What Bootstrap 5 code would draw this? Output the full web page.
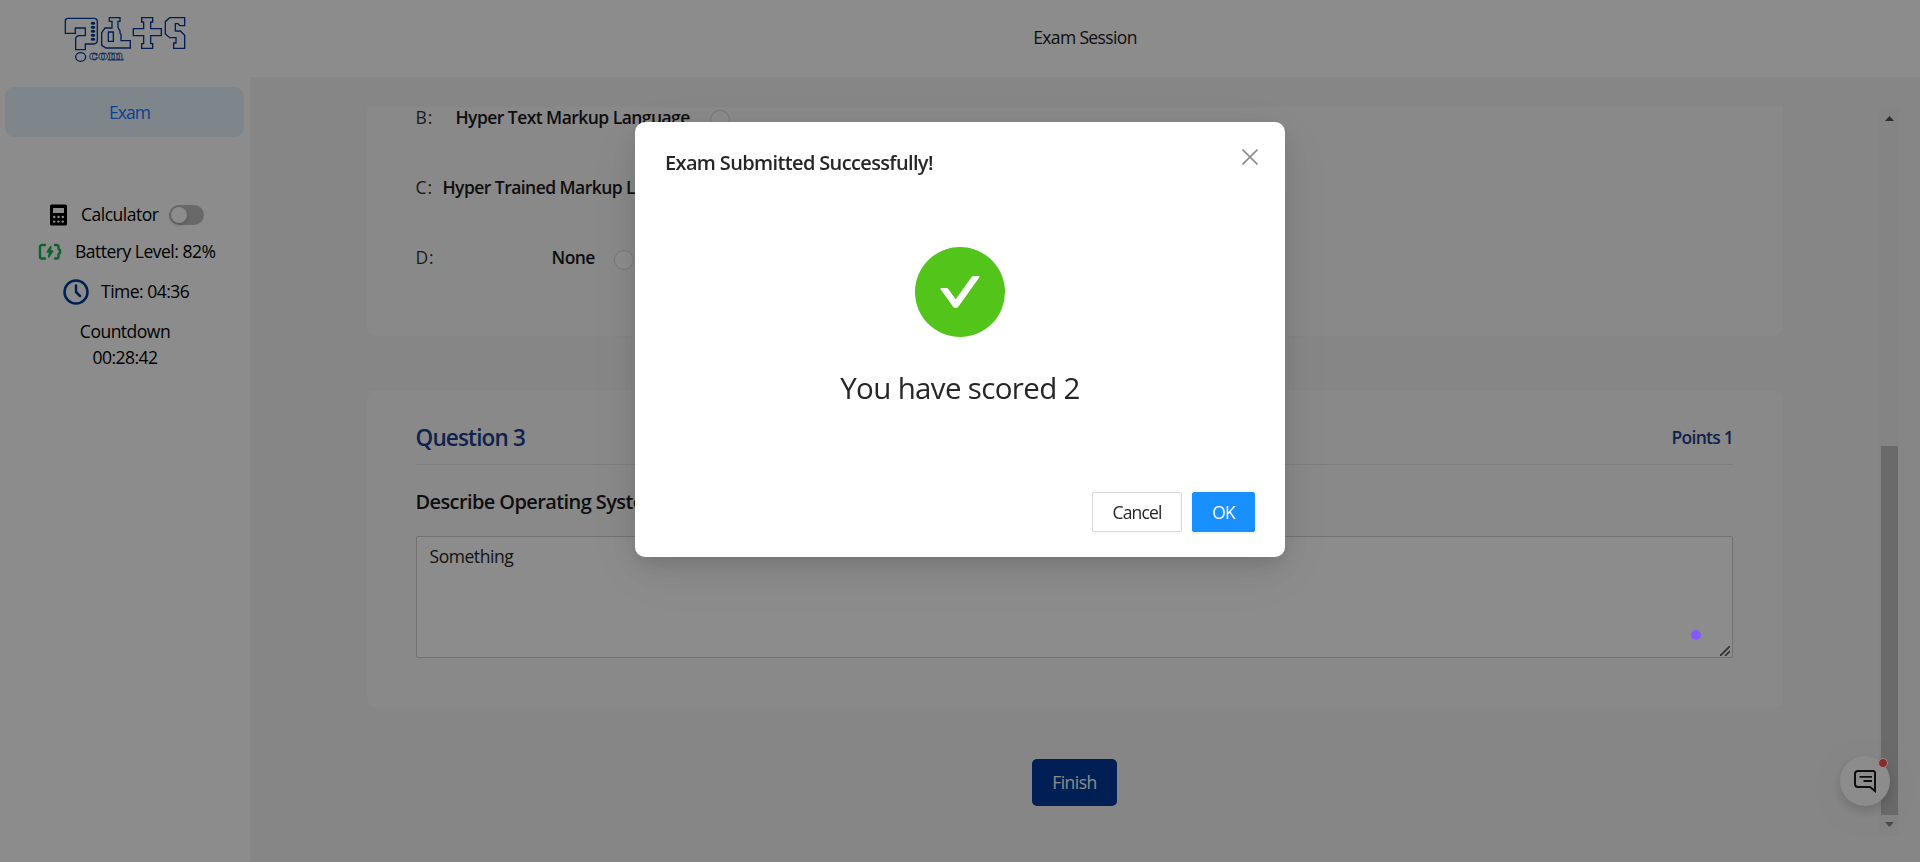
<!DOCTYPE html>
<html lang="en">
<head>
<meta charset="utf-8">
<meta name="viewport" content="width=device-width, initial-scale=1">
<title>Exam Session</title>
<link rel="stylesheet" href="https://cdn.jsdelivr.net/npm/bootstrap@5.3.0/dist/css/bootstrap.min.css">
<style>
  body { font-family: "Open Sans", "Noto Sans", sans-serif; font-size: 17.5px; font-weight: 400; line-height: 27.5px; letter-spacing: -.5px; color: #000; background: #f5f5f5; overflow: hidden; }
  .app-shell { height: 862px; }
  .side { width: 250px; background: #fff; flex: none; }
  .brand { height: 77px; padding: 5px 0 0 50px; }
  .brand svg { display: block; }
  .side-link { margin: 10px 6px 0 5px; height: 50px; border-radius: 9px; background: #e6f4ff; color: #1677ff; padding: 2px 0 0 10px; letter-spacing: -.9px; }
  .tool-list { padding-top: 59px; }
  .tool-row { height: 37px; line-height: 27px; white-space: nowrap; }
  .switch-track { width: 35px; height: 20px; border-radius: 10px; background: #bfbfbf; padding: 2px; }
  .switch-knob { width: 16px; height: 16px; border-radius: 50%; background: #fff; box-shadow: 0 2px 4px rgba(0,35,11,.2); }
  .topbar { height: 77px; background: #fff; padding-bottom: 2px; letter-spacing: -.62px; color: #1a1a1a; }
  .scroll-zone { margin-top: 30px; height: 729px; }
  .q-area { width: 1418px; margin-left: 116px; flex: none; }
  .q-card { background: #f9f9f9; border: 1px solid #f2f2f2; border-radius: 10px; padding: 0 50px 0 48.5px; }
  .q-card.cut { border-top: 0; border-radius: 0 0 10px 10px; height: 230px; }
  .q-card.full { height: 320px; margin-top: 52px; }
  .opt { height: 70px; line-height: 21px; white-space: nowrap; }
  .opt b { font-weight: 600; color: #1a1a1a; letter-spacing: -.55px; }
  .opt .key { letter-spacing: .9px; color: #333; }
  .ring { width: 20px; height: 20px; border: 1px solid #d9d9d9; border-radius: 50%; background: #fff; flex: none; margin-top: 3px; }
  .q-head { height: 75px; border-bottom: 1px solid #e6e6e6; color: #1d3e8f; padding-top: 30px; }
  .q-title { font-size: 22.5px; font-weight: 600; letter-spacing: -.83px; }
  .q-points { font-weight: 600; letter-spacing: -.75px; }
  .q-text { font-size: 20px; font-weight: 600; letter-spacing: -.6px; color: #1a1a1a; margin-top: 23px; white-space: nowrap; }
  .answer-box { margin-top: 20px; }
  .answer { display: block; width: 100%; height: 122px; border: 1px solid #d0d0d0; border-radius: 2px; padding: 6px 13px; line-height: 27.5px; letter-spacing: -.45px; background: #fff; color: #262626; resize: none; }
  .grip { right: 3px; bottom: 2px; }
  .finish { width: 85px; height: 47px; margin: 50px 0 0 666px; background: #003a9b; color: #fff; border-radius: 5px; border: 0; padding: 0; display: block; font-size: 17.5px; letter-spacing: -.5px; }
  .track { width: 20px; margin-left: 95px; background: #f1f1f1; flex: none; }
  .track .thumb { width: 17px; height: 369px; background: #c1c1c1; margin-top: 325px; }
  .chat { position: fixed; left: 1840px; top: 756px; width: 50px; height: 50px; border-radius: 50%; background: #fff; box-shadow: 0 5px 14px rgba(0,0,0,.18), 0 6px 70px rgba(0,0,0,.08); z-index: 5; }
  .chat i { position: absolute; left: 38px; top: 2px; width: 10px; height: 10px; border-radius: 50%; background: #ff4d4f; border: 1px solid #fff; }
  .veil { position: fixed; inset: 0; background: rgba(0,0,0,.45); z-index: 10; }
  .cursor-dot { position: fixed; left: 1691px; top: 630px; width: 10px; height: 10px; border-radius: 50%; background: #8659ff; z-index: 11; }
  .modal.result { z-index: 20; }
  .result .modal-dialog { width: 650px; max-width: 650px; margin: 122px auto 0; }
  .result .modal-content { height: 435px; border: 0; border-radius: 10px; color: #262626; box-shadow: 0 7.5px 20px -5px rgba(0,0,0,.12), 0 11px 35px rgba(0,0,0,.08), 0 15px 60px 10px rgba(0,0,0,.05); }
  .result .modal-header { border: 0; padding: 25px 27px 0 30px; height: 125px; align-items: flex-start; }
  .result .modal-title { font-size: 20px; line-height: 32px; font-weight: 600; letter-spacing: -.64px; }
  .score { font-size: 29.5px; line-height: 54px; letter-spacing: -.65px; margin-top: 24px; }
  .result .modal-footer { border: 0; padding: 0 30px 25px; gap: 10px; }
  .result .modal-footer .btn { margin: 0; height: 40px; border-radius: 2px; font-size: 17.5px; letter-spacing: -.85px; padding: 0; line-height: 38px; }
  .result .modal-footer .btn-plain { width: 90px; border: 1px solid #d9d9d9; background: #fff; color: #262626; box-shadow: 0 2px 0 rgba(0,0,0,.02); }
  .result .modal-footer .btn-ok { width: 63px; border: 1px solid #1890ff; background: #1890ff; color: #fff; box-shadow: 0 2px 0 rgba(0,0,0,.05); }
</style>
</head>
<body>
<div class="app-shell d-flex">
  <aside class="side d-flex flex-column">
    <div class="brand">
      <svg width="150" height="65" viewBox="0 0 450 195" fill="none" stroke="#003a9b" stroke-width="4">
        <path d="M54 40H132Q142 40 142 50V105Q142 117 130 117H106V134H77V103Q77 92 88 92H106V69H76V85H46V48Q46 40 54 40Z"/>
        <path d="M178 38H210V49H204V68L210 78V84L213 89V107H241V129H168L155 121V83L165 69H186V49H178ZM175 81H190V109H175Z"/>
        <path d="M275 38H308V51H302V71H334V92H302V116H308V130H275V116H281V92H250V71H281V51H275Z"/>
        <path d="M359 38H404V62H390L384 56H376V78H391L404 91V130H371V114H378V98H359L346 87V50Z"/>
        <g fill="#003a9b" stroke="none"><ellipse cx="129" cy="55" rx="7" ry="4.5"/><ellipse cx="129" cy="67" rx="7" ry="4.5"/><ellipse cx="129" cy="79" rx="7" ry="4.5"/><ellipse cx="129" cy="91" rx="7" ry="4.5"/><ellipse cx="129" cy="103" rx="7" ry="4.5"/></g>
        <ellipse cx="92" cy="156" rx="15" ry="13"/>
        <text x="117" y="166" textLength="103" lengthAdjust="spacingAndGlyphs" font-family="DejaVu Serif" font-weight="700" font-size="40" letter-spacing="0" stroke-width="2.4" stroke-opacity=".85">com</text>
      </svg>
    </div>
    <a class="side-link d-flex align-items-center justify-content-center text-decoration-none" href="#">Exam</a>
    <div class="tool-list">
      <div class="tool-row d-flex align-items-center" style="padding-left:49px">
        <svg width="19" height="22" viewBox="0 0 19 22"><rect x="1" y=".5" width="17" height="21" rx="1.6" fill="#000"/><path fill="#fff" d="M4 4h11v5H4z"/><g fill="#fff"><circle cx="5.2" cy="13" r="1.2"/><circle cx="9.5" cy="13" r="1.2"/><circle cx="13.8" cy="13" r="1.2"/><circle cx="5.2" cy="17.6" r="1.2"/><circle cx="9.5" cy="17.6" r="1.2"/><circle cx="13.8" cy="17.6" r="1.2"/></g></svg>
        <span style="width:101px;padding-left:13px">Calculator</span>
        <span class="switch-track"><span class="switch-knob d-block"></span></span>
      </div>
      <div class="tool-row d-flex align-items-center" style="padding-left:38px">
        <svg width="24" height="18" viewBox="0 0 24 18" fill="none" stroke="#18b352" stroke-width="2.4" stroke-linecap="round" stroke-linejoin="round"><path d="M7 2H4Q2 2 2 4v9.500q0 2 2 2H7M17 2h1.500q2 0 2 2v1.500q0 1.200 1.500 1.500v3q-1.500.300-1.500 1.500V13.500q0 2-2 2H17"/><path stroke-width="1.500" fill="#18b352" d="M12.800 3.500L9.300 9h2.400l-1 5 4-6h-2.400z"/></svg>
        <span style="padding-left:13px">Battery Level: 82%</span>
      </div>
      <div class="tool-row d-flex align-items-center" style="padding-left:63px;margin-top:3px">
        <svg width="26" height="26" viewBox="0 0 26 26" fill="none" stroke="#003a9b" stroke-width="2.500" stroke-linecap="round" stroke-linejoin="round"><circle cx="13" cy="13" r="11.500"/><path d="M13 6.500V13l4 4"/></svg>
        <span style="padding-left:12px">Time: 04:36</span>
      </div>
      <div class="text-center mt-2" style="line-height:26px">Countdown<br>00:28:42</div>
    </div>
  </aside>

  <div class="flex-grow-1">
    <header class="topbar d-flex align-items-center justify-content-center">Exam Session</header>
    <div class="scroll-zone d-flex">
      <div class="q-area">
        <section class="q-card cut">
          <div class="opt d-flex"><span class="key" style="width:40px">B:</span><b>Hyper Text Markup Language</b><span class="ring" style="margin-left:20px"></span></div>
          <div class="opt d-flex"><span class="key" style="width:27px">C:</span><b>Hyper Trained Markup Language</b></div>
          <div class="opt d-flex"><span class="key" style="width:136px">D:</span><b>None</b><span class="ring" style="margin-left:19px"></span></div>
        </section>
        <section class="q-card full">
          <div class="q-head d-flex justify-content-between">
            <span class="q-title pt-1">Question 3</span><span class="q-points pt-1">Points 1</span>
          </div>
          <div class="q-text">Describe Operating System</div>
          <div class="answer-box position-relative">
            <textarea class="answer">Something</textarea>
            <svg class="grip position-absolute" width="10" height="10" viewBox="0 0 10 10" stroke="#555" stroke-width="1.6"><path d="M0 10L10 0M5 10l5-5"/></svg>
          </div>
        </section>
        <button class="finish">Finish</button>
      </div>
      <div class="track d-flex flex-column align-items-center">
        <svg width="9" height="5" viewBox="0 0 9 5" style="margin-top:9px"><path d="M0 5L4.500 0L9 5z" fill="#505050"/></svg>
        <div class="thumb"></div>
        <svg width="9" height="5" viewBox="0 0 9 5" style="margin-top:7px"><path d="M0 0L4.500 5L9 0z" fill="#8a8a8a"/></svg>
      </div>
    </div>
  </div>
</div>

<div class="chat d-flex align-items-center justify-content-center">
  <svg width="24" height="24" viewBox="0 0 24 24" fill="none" stroke="#1a1a1a" stroke-width="2"><path d="M5 2h15q2 0 2 2v18l-5-4H5q-3 0-3-3V5q0-3 3-3z"/><path stroke-width="1.800" d="M6.500 7.800h12.500M10.500 12h8.500"/></svg>
  <i></i>
</div>

<div class="veil"></div>
<div class="cursor-dot"></div>

<div class="modal result d-block" tabindex="-1">
  <div class="modal-dialog">
    <div class="modal-content">
      <div class="modal-header">
        <h5 class="modal-title">Exam Submitted Successfully!</h5>
        <svg width="16" height="16" viewBox="0 0 16 16" stroke="#8c8c8c" stroke-width="1.600" style="margin-top:2px"><path d="M.5.500l15 15M15.500.500l-15 15"/></svg>
      </div>
      <div class="modal-body p-0 text-center">
        <svg class="d-block mx-auto" width="90" height="90" viewBox="64 64 896 896"><circle cx="512" cy="512" r="448" fill="#52c41a"/><path fill="#fff" d="M699 353h-46.900c-10.200 0-19.900 4.900-25.900 13.300L469 584.300l-71.200-98.800c-6-8.300-15.600-13.300-25.900-13.300H325c-6.500 0-10.300 7.400-6.500 12.700l124.600 172.800a31.800 31.800 0 0 0 51.700 0l210.600-292c3.900-5.300.1-12.700-6.400-12.700z"/></svg>
        <div class="score">You have scored 2</div>
      </div>
      <div class="modal-footer">
        <button class="btn btn-plain">Cancel</button>
        <button class="btn btn-ok">OK</button>
      </div>
    </div>
  </div>
</div>
<script src="https://cdn.jsdelivr.net/npm/bootstrap@5.3.0/dist/js/bootstrap.bundle.min.js"></script>
</body>
</html>
